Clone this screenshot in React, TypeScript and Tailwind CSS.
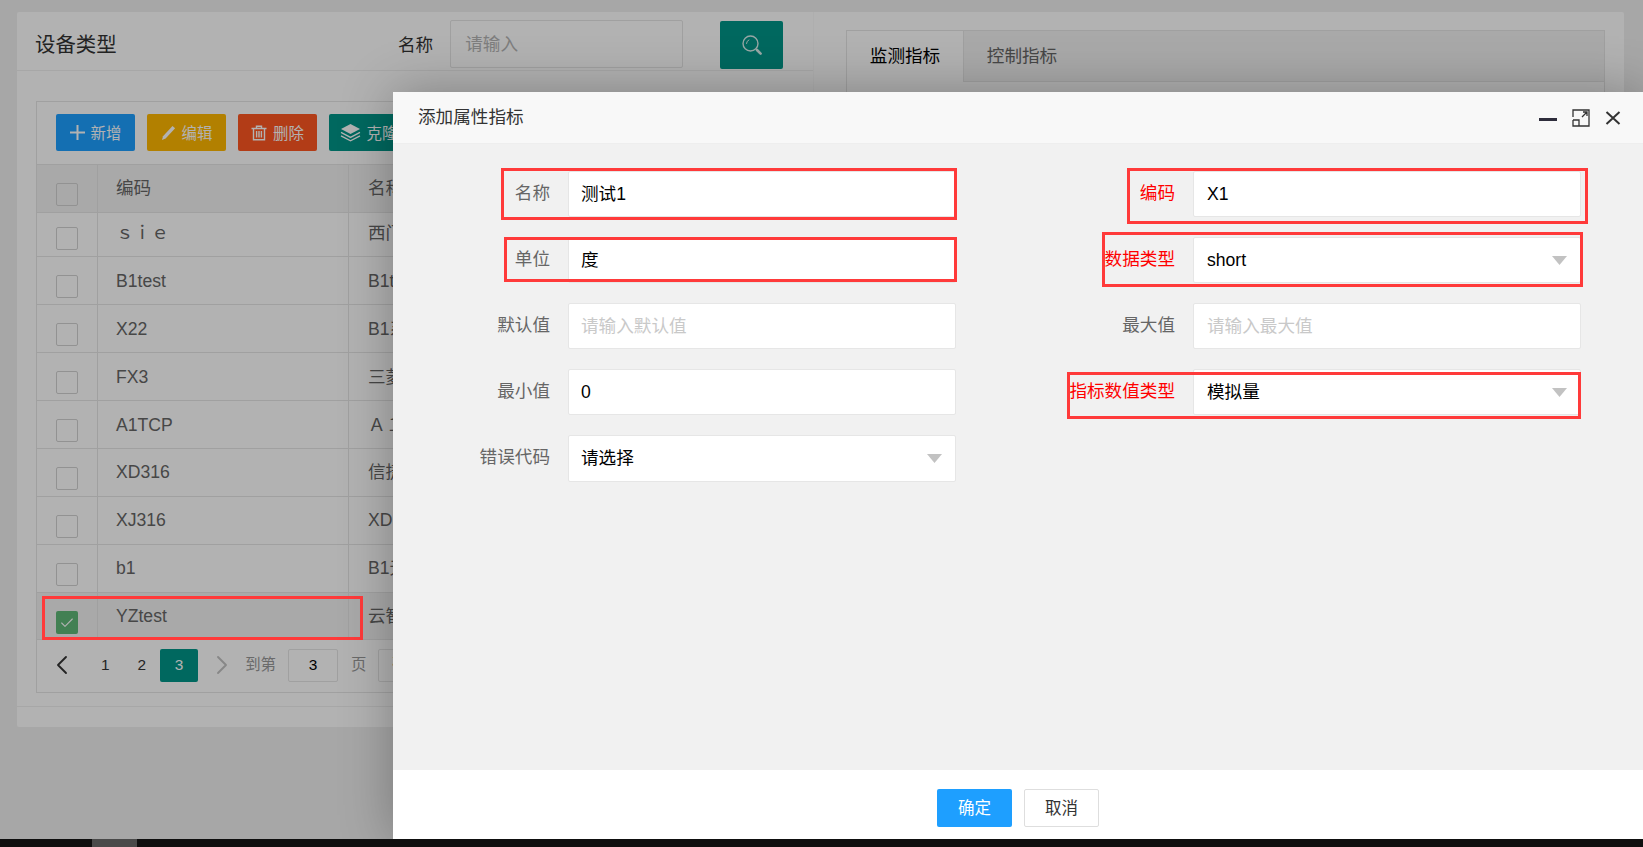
import { ChevronLeft, ChevronRight, Check } from "lucide-react"

const rows = [
  { code: "ｓｉｅ", name: "西门子", h: "h-[44px]", box: "pt-[14px]", text: "pb-[3px]" },
  { code: "B1test", name: "B1test", h: "h-[48px]", box: "pt-[18px]", text: "pt-[1px]" },
  { code: "X22", name: "B1系列", h: "h-[48px]", box: "pt-[18px]", text: "pt-[1px]" },
  { code: "FX3", name: "三菱", h: "h-[48px]", box: "pt-[18px]", text: "pt-[1px]" },
  { code: "A1TCP", name: "Ａ１", h: "h-[48px]", box: "pt-[18px]", text: "pt-[1px]" },
  { code: "XD316", name: "信捷", h: "h-[48px]", box: "pt-[18px]", text: "" },
  { code: "XJ316", name: "XD", h: "h-[48px]", box: "pt-[18px]", text: "" },
  { code: "b1", name: "B1无", h: "h-[48px]", box: "pt-[18px]", text: "" },
]

const font = "font-['Liberation_Sans','Noto_Sans_CJK_SC',sans-serif]"

function Caret() {
  return (
    <svg width="15" height="9" viewBox="0 0 15 9" className="shrink-0">
      <polygon points="0,0 15,0 7.5,9" fill="#c2c2c2" />
    </svg>
  )
}

function Field({
  label,
  value,
  placeholder,
  select,
  red,
  right,
  tall,
}: {
  label: string
  value?: string
  placeholder?: string
  select?: boolean
  red?: boolean
  right?: boolean
  tall?: boolean
}) {
  return (
    <div className="flex h-[46px] items-start">
      <div className={`w-[175px] pr-[18px] pt-[9px] text-right text-[17.6px] leading-[26px] whitespace-nowrap ${red ? "text-[#ff0000]" : "text-[#666666]"}`}>
        {label}
      </div>
      <div className={`flex ${tall ? "h-[47px]" : "h-[46px]"} w-[388px] items-center justify-between rounded-[2px] border border-[#e6e6e6] bg-white ${right ? "pl-[13px]" : "pl-[12px]"} pr-[13px] text-[17.6px]`}>
        {value ? <span className="text-black">{value}</span> : <span className="text-[#c9c9c9]">{placeholder}</span>}
        {select && <Caret />}
      </div>
    </div>
  )
}

function ToolButton({ color, icon, label }: { color: string; icon: React.ReactNode; label: string }) {
  return (
    <div className={`flex h-[37px] w-[79px] shrink-0 items-center justify-center gap-[6px] rounded-[2px] ${color} text-[15.4px] text-white`}>
      {icon}
      <span className="whitespace-nowrap pt-[3px]">{label}</span>
    </div>
  )
}

function Box({ checked }: { checked?: boolean }) {
  if (checked) {
    return (
      <div className="flex h-[23px] w-[22px] items-center justify-center rounded-[2px] bg-[#5FB878]">
        <Check size={16} strokeWidth={1.6} className="text-white" />
      </div>
    )
  }
  return <div className="h-[23px] w-[22px] rounded-[2px] border border-[#d2d2d2] bg-transparent" />
}

function Outline({ className }: { className: string }) {
  return <div className={`pointer-events-none absolute border-[3px] border-[#ff3a3a] ${className}`} />
}

export default function App() {
  return (
    <div className={`relative flex h-screen w-full flex-col overflow-hidden bg-[#f0f0f0] ${font}`}>
      {/* page behind the dialog */}
      <div className="min-h-0 flex-1 pl-[17px] pr-[19px] pt-[12px]">
        <div className="flex h-[715px] rounded-[2px] bg-white">
          <div className="w-[797px] shrink-0 border-r border-[#fafafa]">
            <div className="flex h-[59px] items-center border-b border-[#f0f0f0] pl-[18px] pt-[8px]">
              <div className="w-[363px] text-[20.4px] text-[#333333]">设备类型</div>
              <div className="text-[17.6px] text-[#333333]">名称</div>
              <div className="ml-[17px] flex h-[48px] w-[233px] -translate-y-[1px] items-center rounded-[2px] border border-[#e6e6e6] pl-[14px] text-[17.6px] text-[#b5b5b5]">
                请输入
              </div>
              <div className="ml-[37px] flex h-[48px] w-[63px] items-center justify-center rounded-[2px] bg-[#009688]">
                <svg width="20" height="20" viewBox="0 0 20 20" fill="none" stroke="white" strokeWidth="1.4" strokeLinecap="round" opacity="0.85">
                  <circle cx="8.5" cy="8.5" r="7.5" />
                  <path d="M4.5 8.5a4 4 0 0 1 2.4-3.6" strokeWidth="1" />
                  <path d="M15 15l3.6 3.6" strokeWidth="2.6" />
                </svg>
              </div>
            </div>

            <div className="ml-[19px] mt-[30px] w-[760px] border border-[#e6e6e6]">
              <div className="flex h-[63px] items-center gap-[12px] border-b border-[#e6e6e6] pl-[19px] pb-[1px]">
                <ToolButton
                  color="bg-[#1E9FFF]"
                  label="新增"
                  icon={
                    <svg width="15" height="15" viewBox="0 0 15 15" fill="white">
                      <path d="M6.5 0h2v6.5H15v2H8.5V15h-2V8.5H0v-2h6.5z" />
                    </svg>
                  }
                />
                <ToolButton
                  color="bg-[#FFB800]"
                  label="编辑"
                  icon={
                    <svg width="15" height="16" viewBox="0 0 15 16" fill="white">
                      <path d="M11.5 1l2.6 2.2L4.6 13.4 1 15l1-3.8z" />
                    </svg>
                  }
                />
                <ToolButton
                  color="bg-[#FF5722]"
                  label="删除"
                  icon={
                    <svg width="16" height="16" viewBox="0 0 16 16" fill="none" stroke="white" strokeWidth="1.4">
                      <path d="M0.5 3.5h15M5.5 3.5V1.2h5v2.3M2.5 3.5v11.3h11V3.5M5.6 6v6.5M8 6v6.5M10.4 6v6.5" />
                    </svg>
                  }
                />
                <ToolButton
                  color="bg-[#009688]"
                  label="克隆"
                  icon={
                    <svg width="21" height="20" viewBox="0 0 21 20" fill="white">
                      <path d="M10.5 1L20 6l-9.5 5L1 6z" />
                      <path d="M1 9.4l9.5 5 9.5-5M1 12.8l9.5 5 9.5-5" fill="none" stroke="white" strokeWidth="1.3" />
                    </svg>
                  }
                />
              </div>

              <div className="flex h-[48px] border-b border-[#e6e6e6] bg-[#f2f2f2] text-[17.6px] text-[#666666]">
                <div className="w-[61px] border-r border-[#e6e6e6] pl-[19px] pt-[18px]">
                  <Box />
                </div>
                <div className="w-[251px] border-r border-[#e6e6e6] pl-[18px] pt-[10px]">编码</div>
                <div className="pl-[19px] pt-[10px]">名称</div>
              </div>

              {rows.map((r) => (
                <div key={r.code} className={`flex ${r.h} border-b border-[#e6e6e6] text-[17.6px] text-[#666666]`}>
                  <div className={`w-[61px] border-r border-[#e6e6e6] pl-[19px] ${r.box}`}>
                    <Box />
                  </div>
                  <div className={`flex w-[251px] items-center border-r border-[#e6e6e6] pl-[18px] ${r.text}`}>{r.code}</div>
                  <div className={`flex items-center pl-[19px] ${r.text}`}>{r.name}</div>
                </div>
              ))}
              <div className="flex h-[47px] border-b border-[#e6e6e6] bg-[#f2f2f2] text-[17.6px] text-[#666666]">
                <div className="w-[61px] border-r border-[#e6e6e6] pl-[19px] pt-[18px]">
                  <Box checked />
                </div>
                <div className="flex w-[251px] items-center border-r border-[#e6e6e6] pl-[18px]">YZtest</div>
                <div className="flex items-center pl-[19px]">云智</div>
              </div>

              <div className="flex h-[52px] items-center pb-[2px] pl-[9px] text-[15.4px] text-[#333333]">
                <ChevronLeft size={32} strokeWidth={1.4} className="text-[#333333]" />
                <span className="ml-[23px]">1</span>
                <span className="ml-[28px]">2</span>
                <span className="ml-[14px] flex h-[33px] w-[38px] items-center justify-center rounded-[2px] bg-[#009688] text-white">3</span>
                <ChevronRight size={32} strokeWidth={1.4} className="ml-[8px] text-[#c2c2c2]" />
                <span className="ml-[7px] text-[#999999]">到第</span>
                <span className="ml-[12px] flex h-[33px] w-[50px] items-center justify-center rounded-[2px] border border-[#e6e6e6] text-black">3</span>
                <span className="ml-[13px] text-[#999999]">页</span>
                <span className="ml-[12px] flex h-[33px] w-[60px] items-center rounded-[2px] border border-[#e6e6e6] pl-[13px]">确定</span>
              </div>
            </div>
            <div className="mt-[13px] border-t border-[#f0f0f0]" />
          </div>

          <div className="flex-1 pl-[32px] pr-[19px] pt-[18px]">
            <div className="h-[600px] border border-[#e6e6e6]">
              <div className="flex h-[51px] items-stretch border-b border-[#e6e6e6] bg-[#f2f2f2] text-[17.6px]">
                <div className="-mb-px flex w-[117px] items-center justify-center border-r border-[#e6e6e6] bg-white text-black">监测指标</div>
                <div className="flex w-[116px] items-center justify-center text-[#666666]">控制指标</div>
              </div>
            </div>
          </div>
        </div>
      </div>

      {/* taskbar strip */}
      <div className="z-20 h-[8px] shrink-0 bg-[#0f0f0f] pl-[92px]">
        <div className="h-full w-[45px] bg-[#4a4a4a]" />
      </div>

      {/* shade over the page */}
      <div className="absolute inset-x-0 top-0 bottom-[8px] bg-black/30" />

      {/* row highlight */}
      <Outline className="left-[42px] top-[596px] h-[44px] w-[321px]" />

      {/* dialog */}
      <div className="absolute bottom-[8px] left-[393px] right-0 top-[92px] flex flex-col bg-white shadow-[1px_1px_50px_rgba(0,0,0,0.3)]">
        <div className="flex h-[52px] shrink-0 items-center justify-between border-b border-[#eeeeee] bg-[#f8f8f8] pl-[25px] pr-[22px]">
          <span className="text-[17.6px] text-[#333333]">添加属性指标</span>
          <div className="flex items-center gap-[15px]">
            <svg width="18" height="18" viewBox="0 0 18 18">
              <rect x="0" y="9" width="18" height="3" fill="#2E2D3C" />
            </svg>
            <svg width="18" height="18" viewBox="0 0 18 18" fill="none" stroke="#333333" strokeWidth="1.3">
              <path d="M7 1H17V17H7M1 8V1H7M1 11H7V17H1V11M10 8l5-5M11 3h4v4" />
            </svg>
            <svg width="16" height="16" viewBox="0 0 16 16" fill="none" stroke="#333333" strokeWidth="2">
              <path d="M1.5 2l13 12M14.5 2l-13 12" />
            </svg>
          </div>
        </div>

        <div className="relative grid min-h-0 flex-1 grid-cols-2 content-start gap-y-[20px] bg-[#f1f1f1] pt-[27px]">
          <Field label="名称" value="测试1" />
          <Field label="编码" value="X1" red right />
          <Field label="单位" value="度" />
          <Field label="数据类型" value="short" select red right />
          <Field label="默认值" placeholder="请输入默认值" />
          <Field label="最大值" placeholder="请输入最大值" right />
          <Field label="最小值" value="0" />
          <Field label="指标数值类型" value="模拟量" select red right />
          <Field label="错误代码" value="请选择" select tall />
        </div>

        <div className="flex h-[69px] shrink-0 items-start justify-center gap-[12px] pt-[19px] text-[16.5px]">
          <div className="flex h-[38px] w-[75px] items-center justify-center rounded-[2px] bg-[#1E9FFF] text-white">确定</div>
          <div className="flex h-[38px] w-[75px] items-center justify-center rounded-[2px] border border-[#dedede] bg-white text-[#333333]">取消</div>
        </div>

        {/* red review marks */}
        <Outline className="left-[108px] top-[76px] h-[52px] w-[456px]" />
        <Outline className="left-[111px] top-[145px] h-[45px] w-[453px]" />
        <Outline className="left-[734px] top-[76px] h-[56px] w-[461px]" />
        <Outline className="left-[709px] top-[140px] h-[55px] w-[481px]" />
        <Outline className="left-[674px] top-[280px] h-[47px] w-[514px]" />
      </div>
    </div>
  )
}
